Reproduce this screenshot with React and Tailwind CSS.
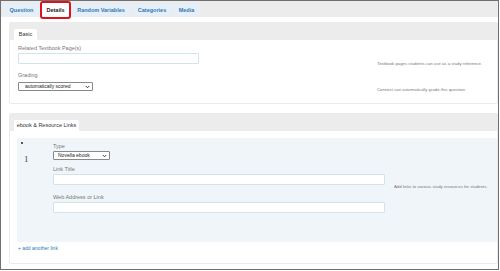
const tabs = [
  { label: 'Question', w: 'w-[37px]' },
  { label: 'Details', w: 'w-[27px]', active: true },
  { label: 'Random Variables', w: 'w-[60px]' },
  { label: 'Categories', w: 'w-[38px]' },
  { label: 'Media', w: 'w-[27px]' },
];

function PanelHeader({ label, tabClass }) {
  return (
    <div className="h-[17px] bg-[#ececec] flex items-end pl-[4px]">
      <div className={`bg-white h-[11px] flex items-center justify-center text-[5.5px] text-[#333] rounded-t-[2px] ${tabClass}`}>
        {label}
      </div>
    </div>
  );
}

function Field({ label, className = '' }) {
  return (
    <div className={className}>
      <div className="text-[5.5px] text-[#777] leading-[7px]">{label}</div>
      <div className="mt-[1px] h-[11px] bg-white border-[1.5px] border-[#d3e3ec] rounded-[1px]" />
    </div>
  );
}

function Select({ value, className = '' }) {
  return (
    <div className={`h-[9px] bg-white border border-[#888] rounded-[1px] flex items-center justify-between pr-[2px] ${className}`}>
      <span className="text-[5px] text-[#222]">{value}</span>
      <svg width="5" height="4" viewBox="0 0 10 8">
        <path d="M1.5 2 L5 5.5 L8.5 2" fill="none" stroke="#222" strokeWidth="1.8" />
      </svg>
    </div>
  );
}

export default function App() {
  return (
    <div className="w-[500px] h-[271px] bg-white" style={{ fontFamily: '"Liberation Sans", Arial, sans-serif' }}>
      <div className="w-[499px] h-[270px] border border-[#6f6f6f] flex flex-col">
        {/* Tabs */}
        <div className="h-[16px] bg-[#ececec] flex items-end pl-[2px] gap-[2px] relative">
          {tabs.map((t) => (
            <div
              key={t.label}
              className={`h-[14px] ${t.w} flex items-center justify-center text-[5.5px] font-bold relative ${
                t.active ? 'bg-white text-[#222]' : 'bg-[#e6eff7] text-[#2f79b6]'
              }`}
            >
              {t.label}
              {t.active && (
                <div className="absolute left-[-2px] right-[-2px] top-[-2px] bottom-[-2px] border-2 border-[#d9141b] rounded-[3px]" />
              )}
            </div>
          ))}
        </div>

        <div className="flex-1 pl-[8px] pt-[5px] flex flex-col">
          {/* Basic panel */}
          <div className="h-[82px] border border-[#ebebeb] rounded-[2px] flex flex-col">
            <PanelHeader label="Basic" tabClass="w-[23px]" />
            <div className="flex-1 pl-[8px] pt-[5px] flex">
              <div className="w-[181px]">
                <Field label="Related Textbook Page(s)" />
                <div className="text-[5.5px] text-[#777] leading-[7px] mt-[8px]">Grading</div>
                <Select value={<span className="pl-[6px]">automatically scored</span>} className="mt-[3px] w-[75px]" />
              </div>
              <div className="ml-[178px] text-[4.3px] text-[#777] leading-[6px]">
                <div className="mt-[16px]">Textbook pages students can use as a study reference.</div>
                <div className="mt-[20px]">Connect can automatically grade this question.</div>
              </div>
            </div>
          </div>

          {/* Links panel */}
          <div className="mt-[9px] h-[151px] border border-[#ebebeb] rounded-[2px] flex flex-col">
            <PanelHeader label="ebook & Resource Links" tabClass="w-[65px]" />
            <div className="flex-1 pl-[7px] pt-[7px]">
              <div className="h-[104px] bg-[#f0f5f9] flex">
                <div className="w-[36px] pl-[4px] pt-[4px]">
                  <div className="w-[2px] h-[2px] bg-[#555]" />
                  <div className="mt-[10px] pl-[3px] text-[9px] text-[#444] leading-[10px]" style={{ fontFamily: '"Liberation Serif", serif' }}>1</div>
                </div>
                <div className="w-[332px] pt-[5px]">
                  <div className="text-[5.5px] text-[#777] leading-[7px]">Type</div>
                  <Select value={<span className="pl-[4px]">Novella ebook</span>} className="mt-[1px] w-[57px]" />
                  <Field label="Link Title" className="mt-[6px]" />
                  <Field label="Web Address or Link" className="mt-[9px]" />
                </div>
                <div className="ml-[9px] pt-[46px] text-[4.3px] text-[#777] leading-[6px]">
                  Add links to various study resources for students.
                </div>
              </div>
              <div className="mt-[2px] pl-[1px] text-[5px] text-[#2f79b6] leading-[8px]">+ add another link</div>
            </div>
          </div>
        </div>
      </div>
    </div>
  );
}
